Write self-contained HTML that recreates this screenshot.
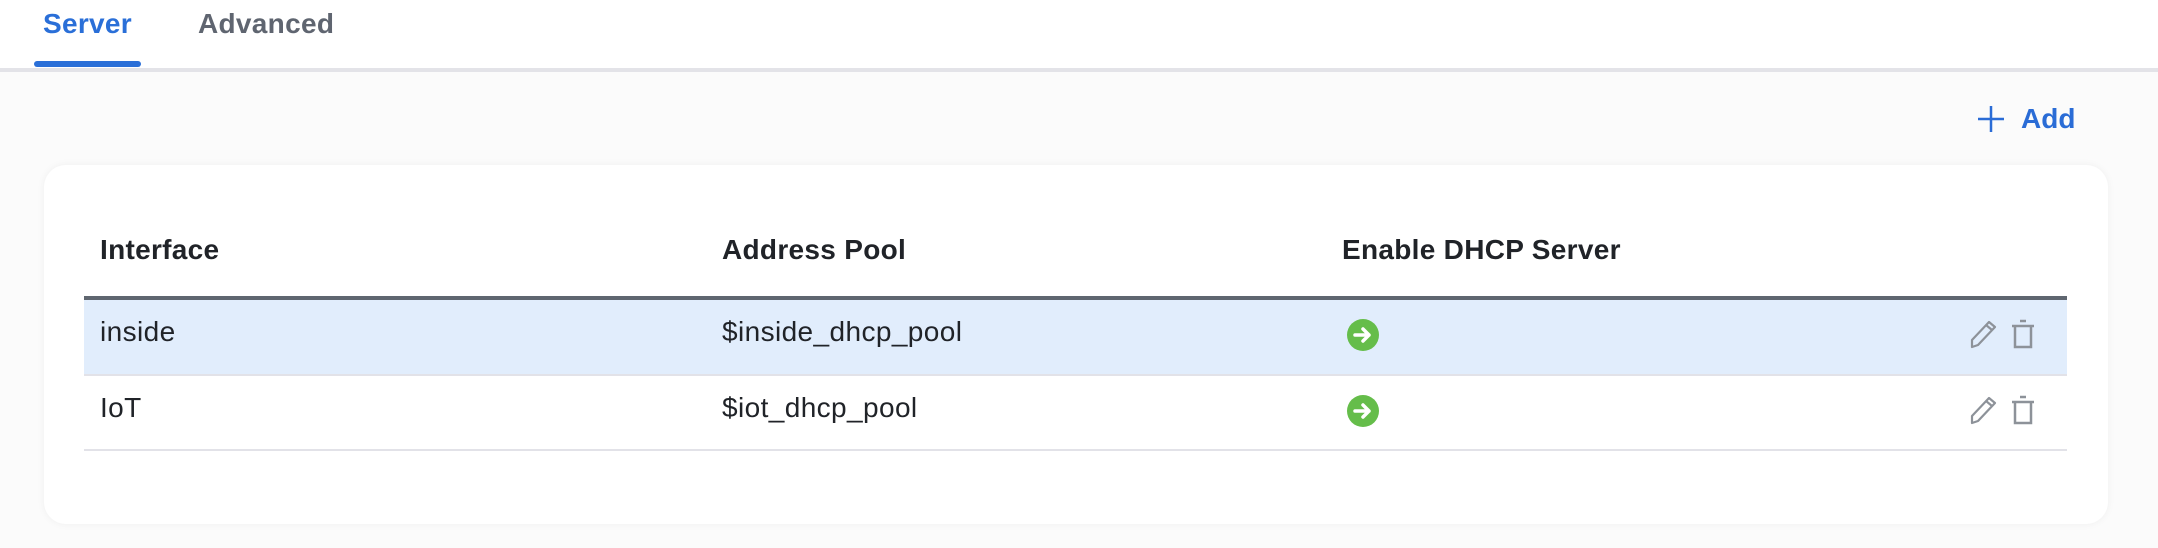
<!DOCTYPE html>
<html><head><style>
*{margin:0;padding:0;box-sizing:border-box}
body{width:2158px;height:548px;background:#fbfbfb;font-family:"Liberation Sans",sans-serif;position:relative;overflow:hidden;color:#202328}
.top{position:absolute;left:0;top:0;width:2158px;height:68px;background:#fff}
.bar{position:absolute;left:0;top:68px;width:2158px;height:4px;background:#e3e3e8}
.tab{position:absolute;top:8px;font-size:28px;font-weight:bold;letter-spacing:0.3px}
.ul{position:absolute;left:34px;top:61px;width:107px;height:6px;border-radius:3px;background:#2a6fd8}
.add{position:absolute;left:1977px;top:103px;font-size:28px;font-weight:bold;color:#2a6cd6;display:flex;align-items:center}
.card{position:absolute;left:44px;top:165px;width:2064px;height:359px;background:#fff;border-radius:22px;box-shadow:0 0 8px rgba(0,0,0,0.05)}
.t{position:absolute;font-size:28px;white-space:nowrap;letter-spacing:0.4px}
.h{font-weight:bold;letter-spacing:0.3px}
.line{position:absolute;left:84px;width:1983px}
.ic{position:absolute}
</style></head><body>
<div class="top"></div><div class="bar"></div>
<div class="tab" style="left:43px;color:#2a6fd8">Server</div>
<div class="tab" style="left:198px;color:#5f6570">Advanced</div>
<div class="ul"></div>
<div class="add"><svg width="28" height="28" viewBox="0 0 28 28"><path d="M14 1V27M1 14H27" stroke="#2a6cd6" stroke-width="2.5"/></svg><span style="margin-left:16px">Add</span></div>
<div class="card"></div>
<div class="t h" style="left:100px;top:234px">Interface</div>
<div class="t h" style="left:722px;top:234px">Address Pool</div>
<div class="t h" style="left:1342px;top:234px">Enable DHCP Server</div>
<div class="line" style="top:296px;height:4px;background:#5f6670"></div>
<div class="line" style="top:300px;height:74px;background:#e1edfc"></div>
<div class="line" style="top:374px;height:2px;background:#e2e2e8"></div>
<div class="line" style="top:449px;height:2px;background:#e2e2e8"></div>
<div class="t" style="left:100px;top:316px">inside</div>
<div class="t" style="left:722px;top:316px">$inside_dhcp_pool</div>
<div class="t" style="left:100px;top:392px">IoT</div>
<div class="t" style="left:722px;top:392px">$iot_dhcp_pool</div>
<svg class="ic" style="left:1347px;top:319px" width="32" height="32" viewBox="0 0 32 32"><circle cx="16" cy="16" r="16" fill="#65bd4a"/><path d="M8 16H22M16 10L22 16L16 22" stroke="#fff" stroke-width="3.5" fill="none" stroke-linecap="round" stroke-linejoin="round"/></svg>
<svg class="ic" style="left:1347px;top:395px" width="32" height="32" viewBox="0 0 32 32"><circle cx="16" cy="16" r="16" fill="#65bd4a"/><path d="M8 16H22M16 10L22 16L16 22" stroke="#fff" stroke-width="3.5" fill="none" stroke-linecap="round" stroke-linejoin="round"/></svg>
<svg class="ic" style="left:1968px;top:318px" width="72" height="32" viewBox="0 0 72 32"><path d="M4 29L4 22L21 4L27 9L10 27Z M18 7L24 12" stroke="#8d9299" stroke-width="2.2" fill="none" stroke-linejoin="round"/><path d="M52 3H58M44 8H66M47 8V29H63V8" stroke="#8d9299" stroke-width="2.5" fill="none"/></svg>
<svg class="ic" style="left:1968px;top:394px" width="72" height="32" viewBox="0 0 72 32"><path d="M4 29L4 22L21 4L27 9L10 27Z M18 7L24 12" stroke="#8d9299" stroke-width="2.2" fill="none" stroke-linejoin="round"/><path d="M52 3H58M44 8H66M47 8V29H63V8" stroke="#8d9299" stroke-width="2.5" fill="none"/></svg>
</body></html>
